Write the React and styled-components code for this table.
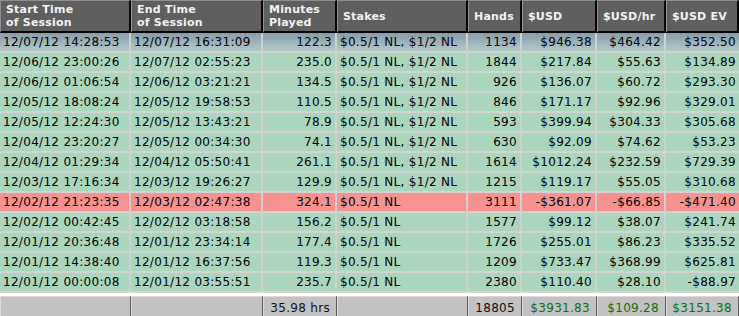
import React from "react";
import styled, { createGlobalStyle } from "styled-components";

const GlobalStyle = createGlobalStyle`
  html, body {
    margin: 0;
    padding: 0;
    background: #ffffff;
  }
  body {
    font-family: "DejaVu Sans", Verdana, sans-serif;
  }
`;

const COLUMNS = "131px 132px 74px 131px 54px 75px 69px 73px";

const Grid = styled.div`
  width: 739px;
  font-size: 12px;
  letter-spacing: 0.3px;
`;

const HeaderRow = styled.div`
  display: grid;
  grid-template-columns: ${COLUMNS};
  height: 33px;
`;

const HeadCell = styled.div`
  box-sizing: border-box;
  display: flex;
  align-items: center;
  padding: 0 5px;
  background: #5f5f5f;
  border-top: 1px solid #8f8f8f;
  border-left: 1px solid #8f8f8f;
  border-right: 2px solid #050505;
  border-bottom: 2px solid #050505;
  color: #f2f2f2;
  font-size: 11px;
  letter-spacing: 0.2px;
  font-weight: bold;
  line-height: 13px;
  white-space: pre-line;
`;

const Row = styled.div`
  display: grid;
  grid-template-columns: ${COLUMNS};
  height: 20px;
  background: ${({ $variant }) =>
    $variant === "selected"
      ? "linear-gradient(to bottom, #899baa 0%, #a2b8bf 55%, #b2cfc6 100%)"
      : $variant === "loss"
      ? "#f7938f"
      : "#aad6be"};
`;

const Cell = styled.div`
  box-sizing: border-box;
  display: flex;
  align-items: center;
  justify-content: ${({ $right }) => ($right ? "flex-end" : "flex-start")};
  padding: 0 ${({ $right }) => ($right ? "3px" : "4px")} 0 3px;
  border-right: 2px solid #cdd2cf;
  border-bottom: 2px solid #d3d3d3;
  color: #000000;
  white-space: nowrap;

  &:last-child {
    border-right: none;
  }
`;

const Footer = styled.div`
  display: grid;
  grid-template-columns: ${COLUMNS};
  height: 23px;
  border-top: 3px solid #ffffff;
`;

const FootCell = styled.div`
  box-sizing: border-box;
  display: flex;
  align-items: center;
  justify-content: flex-end;
  padding: 0 6px 0 4px;
  background: #c2c2c2;
  border-top: 1px solid #dadada;
  border-left: 1px solid #dcdcdc;
  border-right: 1px solid #5c5c5c;
  color: ${({ $money }) => ($money ? "#0b720b" : "#111111")};
  white-space: nowrap;
`;

const headers = [
  "Start Time\nof Session",
  "End Time\nof Session",
  "Minutes\nPlayed",
  "Stakes",
  "Hands",
  "$USD",
  "$USD/hr",
  "$USD EV",
];

const MIXED = "$0.5/1 NL, $1/2 NL";
const SINGLE = "$0.5/1 NL";

const sessions = [
  ["12/07/12 14:28:53", "12/07/12 16:31:09", "122.3", MIXED, "1134", "$946.38", "$464.42", "$352.50", "selected"],
  ["12/06/12 23:00:26", "12/07/12 02:55:23", "235.0", MIXED, "1844", "$217.84", "$55.63", "$134.89"],
  ["12/06/12 01:06:54", "12/06/12 03:21:21", "134.5", MIXED, "926", "$136.07", "$60.72", "$293.30"],
  ["12/05/12 18:08:24", "12/05/12 19:58:53", "110.5", MIXED, "846", "$171.17", "$92.96", "$329.01"],
  ["12/05/12 12:24:30", "12/05/12 13:43:21", "78.9", MIXED, "593", "$399.94", "$304.33", "$305.68"],
  ["12/04/12 23:20:27", "12/05/12 00:34:30", "74.1", MIXED, "630", "$92.09", "$74.62", "$53.23"],
  ["12/04/12 01:29:34", "12/04/12 05:50:41", "261.1", MIXED, "1614", "$1012.24", "$232.59", "$729.39"],
  ["12/03/12 17:16:34", "12/03/12 19:26:27", "129.9", MIXED, "1215", "$119.17", "$55.05", "$310.68"],
  ["12/02/12 21:23:35", "12/03/12 02:47:38", "324.1", SINGLE, "3111", "-$361.07", "-$66.85", "-$471.40", "loss"],
  ["12/02/12 00:42:45", "12/02/12 03:18:58", "156.2", SINGLE, "1577", "$99.12", "$38.07", "$241.74"],
  ["12/01/12 20:36:48", "12/01/12 23:34:14", "177.4", SINGLE, "1726", "$255.01", "$86.23", "$335.52"],
  ["12/01/12 14:38:40", "12/01/12 16:37:56", "119.3", SINGLE, "1209", "$733.47", "$368.99", "$625.81"],
  ["12/01/12 00:00:08", "12/01/12 03:55:51", "235.7", SINGLE, "2380", "$110.40", "$28.10", "-$88.97"],
];

const RIGHT = [false, false, true, false, true, true, true, true];

const totals = [
  { text: "" },
  { text: "" },
  { text: "35.98 hrs" },
  { text: "" },
  { text: "18805" },
  { text: "$3931.83", money: true },
  { text: "$109.28", money: true },
  { text: "$3151.38", money: true },
];

function App() {
  return (
    <>
      <GlobalStyle />
      <Grid>
        <HeaderRow>
          {headers.map((h) => (
            <HeadCell key={h}>{h}</HeadCell>
          ))}
        </HeaderRow>
        {sessions.map((s) => (
          <Row key={s[0]} $variant={s[8]}>
            {s.slice(0, 8).map((value, i) => (
              <Cell key={i} $right={RIGHT[i]}>
                {value}
              </Cell>
            ))}
          </Row>
        ))}
        <Footer>
          {totals.map((t, i) => (
            <FootCell key={i} $money={t.money}>
              {t.text}
            </FootCell>
          ))}
        </Footer>
      </Grid>
    </>
  );
}

export default App;
